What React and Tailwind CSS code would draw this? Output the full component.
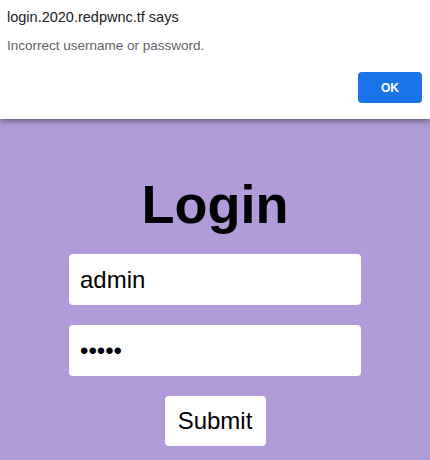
import React from 'react';

export default function App() {
  return (
    <div className="relative min-h-[460px] w-full overflow-hidden bg-[#b19cd9] font-['Liberation_Sans',Arial,sans-serif]">
      {/* alert dialog overlay */}
      <div className="absolute left-0 top-0 z-10 h-[119px] w-full bg-white shadow-[0_2px_6px_rgba(0,0,0,0.45)]">
        <div className="px-[7px] pt-[8px] text-[14.5px] leading-[18px] text-[#202124]">login.2020.redpwnc.tf says</div>
        <div className="mt-[12px] px-[7px] text-[13.5px] leading-[16px] text-[#5f6368]">Incorrect username or password.</div>
        <button
          type="button"
          className="absolute left-[358px] top-[72px] h-[31px] w-[64px] rounded-[4px] bg-[#1a73e8] text-[12px] font-bold text-white"
        >
          OK
        </button>
      </div>

      <form className="flex flex-col items-center pt-[177px]" onSubmit={e => e.preventDefault()}>
        <h1 className="text-[54px] font-bold leading-[54px] text-black">Login</h1>
        <input
          type="text"
          defaultValue="admin"
          className="mt-[23px] h-[51px] w-[292px] rounded-[4px] bg-white pl-[11px] text-[24px] text-black outline-none"
        />
        <input
          type="password"
          defaultValue="admin"
          className="mt-[20px] h-[51px] w-[292px] rounded-[4px] bg-white pl-[11px] text-[24px] text-black outline-none"
        />
        <button
          type="submit"
          className="mt-[20px] h-[50px] w-[101px] rounded-[4px] bg-white text-[24px] text-black"
        >
          Submit
        </button>
      </form>
    </div>
  );
}
